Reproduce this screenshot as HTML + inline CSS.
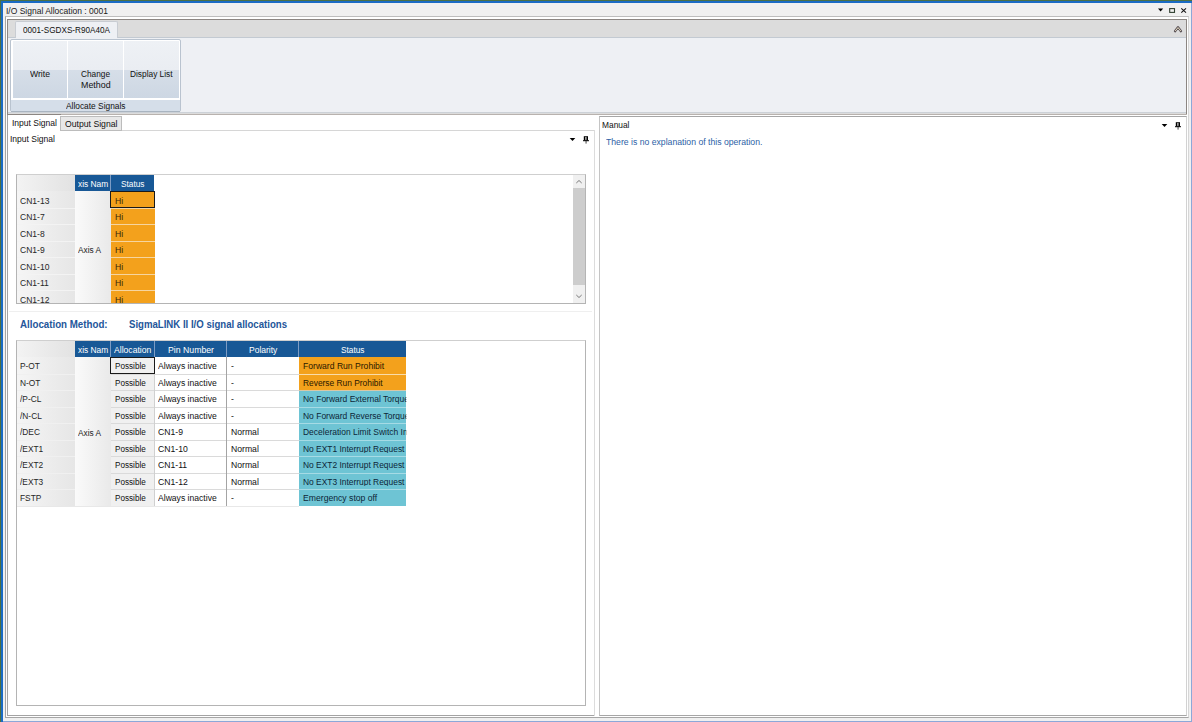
<!DOCTYPE html>
<html><head><meta charset="utf-8">
<style>
*{box-sizing:border-box;margin:0;padding:0}
html,body{width:1192px;height:722px;overflow:hidden;background:#f0f0f0;font-family:"Liberation Sans",sans-serif;color:#1e1e1e;position:relative}
.a{position:absolute}
.t{position:absolute;white-space:nowrap;line-height:1}
</style></head><body>
<div class="a" style="left:0px;top:0px;width:1192px;height:722px;background:#f0f0f0"></div>
<div class="a" style="left:0px;top:0px;width:1192px;height:1px;background:#4b7045"></div>
<div class="a" style="left:0px;top:0px;width:1px;height:722px;background:#4b7045"></div>
<div class="a" style="left:1px;top:1px;width:1191px;height:2px;background:#1a6bc4"></div>
<div class="a" style="left:1px;top:1px;width:2px;height:721px;background:#1a6bc4"></div>
<div class="a" style="left:1191px;top:3px;width:1px;height:719px;background:#8ca8d8"></div>
<div class="a" style="left:3px;top:721px;width:1189px;height:1px;background:#8ca8d8"></div>
<div class="t" style="left:6.00px;top:5.60px;font-size:9.6px;color:#1a1a1a;transform:scaleX(0.8848);transform-origin:0 0;">I/O Signal Allocation : 0001</div>
<svg class="a" style="left:1150px;top:0px" width="42" height="16" viewBox="0 0 42 16"><path d="M8 8.5 L13.2 8.5 L10.6 11.6 Z" fill="#000"/><rect x="19.7" y="8.6" width="4.8" height="3.8" fill="none" stroke="#2f3f2f" stroke-width="1.1"/><path d="M31.3 8.3 L36 12.7 M36 8.3 L31.3 12.7" stroke="#111" stroke-width="1.05"/></svg>
<div class="a" style="left:5px;top:16px;width:1184px;height:702px;border:1px solid #a6a6a6;border-top-color:#bdbdbd;border-right-color:#d6d6d6;background:#fff"></div>
<div class="a" style="left:7px;top:19px;width:1180px;height:96px;border:1px solid #8c8682;background:#eef0f4"></div>
<div class="a" style="left:8px;top:20px;width:1178px;height:17.5px;background:#dcdcdc;border-bottom:1px solid #c3cad2"></div>
<div class="a" style="left:15px;top:20.5px;width:103px;height:17.5px;background:#eef0f4;border:1px solid #c8ccd2;border-bottom:none;border-radius:2px 2px 0 0"></div>
<div class="t" style="left:23.00px;top:24.60px;font-size:9.6px;color:#111;transform:scaleX(0.8492);transform-origin:0 0;">0001-SGDXS-R90A40A</div>
<svg class="a" style="left:1171.5px;top:23px" width="12" height="11" viewBox="0 0 12 11"><path d="M3 8.2 L6 4.2 L9 8.2" fill="none" stroke="#5c5458" stroke-width="2.3" stroke-linejoin="round" stroke-linecap="round"/><path d="M3.2 8 L6 4.6 L8.8 8" fill="none" stroke="#f2e6c8" stroke-width="0.9" stroke-linejoin="round"/></svg>
<div class="a" style="left:10px;top:39px;width:171px;height:73px;border:1px solid #b9c3cf;border-radius:2px;background:#fff"></div>
<div class="a" style="left:13px;top:41px;width:54px;height:57px;background:linear-gradient(#eef1f5,#eaedf2 51%,#d6dee8 51%,#cdd7e3)"></div>
<div class="a" style="left:68px;top:41px;width:55px;height:57px;background:linear-gradient(#eef1f5,#eaedf2 51%,#d6dee8 51%,#cdd7e3)"></div>
<div class="a" style="left:124px;top:41px;width:54.5px;height:57px;background:linear-gradient(#eef1f5,#eaedf2 51%,#d6dee8 51%,#cdd7e3)"></div>
<div class="t" style="left:30.00px;top:68.60px;font-size:9.6px;color:#111;transform:scaleX(0.8999);transform-origin:0 0;">Write</div>
<div class="t" style="left:81.00px;top:68.60px;font-size:9.6px;color:#111;transform:scaleX(0.8624);transform-origin:0 0;">Change</div>
<div class="t" style="left:81.00px;top:79.60px;font-size:9.6px;color:#111;transform:scaleX(0.9245);transform-origin:0 0;">Method</div>
<div class="t" style="left:130.00px;top:68.60px;font-size:9.6px;color:#111;transform:scaleX(0.8679);transform-origin:0 0;">Display List</div>
<div class="a" style="left:11px;top:99.5px;width:169px;height:12px;background:#d5dee9"></div>
<div class="t" style="left:66.00px;top:100.60px;font-size:9.6px;color:#111;transform:scaleX(0.8711);transform-origin:0 0;">Allocate Signals</div>
<div class="a" style="left:11px;top:111px;width:169px;height:1px;background:#a9b4c0"></div>
<div class="a" style="left:7px;top:114px;width:588px;height:602px;border:1px solid #a3a3a3;border-right:none;border-top-color:#b4aeaa;background:#fff"></div>
<div class="a" style="left:7px;top:114px;width:54px;height:1px;background:#8c8682"></div>
<div class="a" style="left:594px;top:130px;width:1px;height:586px;background:#dcdcdc"></div>
<div class="a" style="left:8px;top:112px;width:1178px;height:1px;background:#ccd1d7"></div>
<div class="a" style="left:8px;top:113px;width:1178px;height:1px;background:#dcdcdc"></div>
<div class="a" style="left:61px;top:114px;width:1126px;height:1px;background:#b8b2ae"></div>
<div class="a" style="left:121px;top:130px;width:473px;height:1px;background:#d6d6d6"></div>
<div class="a" style="left:60px;top:116px;width:61.5px;height:15px;background:#e8e8e8;border:1px solid #bcbcbc"></div>
<div class="t" style="left:12.00px;top:117.60px;font-size:9.6px;color:#111;transform:scaleX(0.8874);transform-origin:0 0;">Input Signal</div>
<div class="t" style="left:64.50px;top:118.60px;font-size:9.6px;color:#111;transform:scaleX(0.9024);transform-origin:0 0;">Output Signal</div>
<div class="t" style="left:10.00px;top:133.60px;font-size:9.6px;color:#111;transform:scaleX(0.8874);transform-origin:0 0;">Input Signal</div>
<svg class="a" style="left:569px;top:136px" width="24" height="10" viewBox="0 0 24 10"><path d="M0.7 1.9 L6.3 1.9 L3.5 4.9 Z" fill="#000"/><path d="M14.8 0.2 H19 V4.5 H14.8 Z" fill="#000"/><rect x="16.4" y="0.9" width="1" height="3" fill="#fff"/><rect x="14" y="4.2" width="6" height="1" fill="#000"/><rect x="16.6" y="5" width="0.9" height="2.6" fill="#333"/></svg>
<div class="a" style="left:16px;top:174px;width:570px;height:130px;border:1px solid #b4b4b4;border-top-color:#cfcfcf;background:#fff"></div>
<div class="a" style="left:17px;top:175px;width:58px;height:16px;background:linear-gradient(90deg,#f3f3f3,#e2e2e2)"></div>
<div class="a" style="left:17px;top:191px;width:58px;height:1px;background:#f2f2f2"></div>
<div class="a" style="left:75px;top:175px;width:79px;height:16px;background:#185896"></div>
<div class="t" style="left:78.00px;top:178.60px;font-size:9.6px;color:#fff;transform:scaleX(0.8712);transform-origin:0 0;width:36.7px;overflow:hidden;">xis Nam</div>
<div class="a" style="left:110px;top:175px;width:1px;height:16px;background:#7d9cc4"></div>
<div class="t" style="left:120.75px;top:178.60px;font-size:9.6px;color:#fff;transform:scaleX(0.8635);transform-origin:0 0;">Status</div>
<div class="a" style="left:17px;top:191.0px;width:58px;height:16.5px;background:linear-gradient(90deg,#f5f5f5,#e6e6e6)"></div>
<div class="a" style="left:110.5px;top:191.0px;width:44px;height:16.5px;background:#f3a11c"></div>
<div class="a" style="left:17px;top:207.5px;width:58px;height:16.5px;background:linear-gradient(90deg,#f5f5f5,#e6e6e6)"></div>
<div class="a" style="left:110.5px;top:207.5px;width:44px;height:16.5px;background:#f3a11c"></div>
<div class="a" style="left:17px;top:224.0px;width:58px;height:16.5px;background:linear-gradient(90deg,#f5f5f5,#e6e6e6)"></div>
<div class="a" style="left:110.5px;top:224.0px;width:44px;height:16.5px;background:#f3a11c"></div>
<div class="a" style="left:17px;top:240.5px;width:58px;height:16.5px;background:linear-gradient(90deg,#f5f5f5,#e6e6e6)"></div>
<div class="a" style="left:110.5px;top:240.5px;width:44px;height:16.5px;background:#f3a11c"></div>
<div class="a" style="left:17px;top:257.0px;width:58px;height:16.5px;background:linear-gradient(90deg,#f5f5f5,#e6e6e6)"></div>
<div class="a" style="left:110.5px;top:257.0px;width:44px;height:16.5px;background:#f3a11c"></div>
<div class="a" style="left:17px;top:273.5px;width:58px;height:16.5px;background:linear-gradient(90deg,#f5f5f5,#e6e6e6)"></div>
<div class="a" style="left:110.5px;top:273.5px;width:44px;height:16.5px;background:#f3a11c"></div>
<div class="a" style="left:17px;top:290.0px;width:58px;height:13.0px;background:linear-gradient(90deg,#f5f5f5,#e6e6e6)"></div>
<div class="a" style="left:110.5px;top:290.0px;width:44px;height:13.0px;background:#f3a11c"></div>
<div class="a" style="left:17px;top:207.5px;width:58px;height:1px;background:#f3f3f3"></div>
<div class="a" style="left:110.5px;top:207.5px;width:44.0px;height:1px;background:#f6d5a0"></div>
<div class="a" style="left:17px;top:224.0px;width:58px;height:1px;background:#f3f3f3"></div>
<div class="a" style="left:110.5px;top:224.0px;width:44.0px;height:1px;background:#f6d5a0"></div>
<div class="a" style="left:17px;top:240.5px;width:58px;height:1px;background:#f3f3f3"></div>
<div class="a" style="left:110.5px;top:240.5px;width:44.0px;height:1px;background:#f6d5a0"></div>
<div class="a" style="left:17px;top:257.0px;width:58px;height:1px;background:#f3f3f3"></div>
<div class="a" style="left:110.5px;top:257.0px;width:44.0px;height:1px;background:#f6d5a0"></div>
<div class="a" style="left:17px;top:273.5px;width:58px;height:1px;background:#f3f3f3"></div>
<div class="a" style="left:110.5px;top:273.5px;width:44.0px;height:1px;background:#f6d5a0"></div>
<div class="a" style="left:17px;top:290.0px;width:58px;height:1px;background:#f3f3f3"></div>
<div class="a" style="left:110.5px;top:290.0px;width:44.0px;height:1px;background:#f6d5a0"></div>
<div class="t" style="left:20.00px;top:195.60px;font-size:9.6px;color:#262626;transform:scaleX(0.8900);transform-origin:0 0;">CN1-13</div>
<div class="t" style="left:114.80px;top:195.60px;font-size:9.6px;color:#3a2608;transform:scaleX(0.9000);transform-origin:0 0;">Hi</div>
<div class="t" style="left:20.00px;top:212.10px;font-size:9.6px;color:#262626;transform:scaleX(0.8900);transform-origin:0 0;">CN1-7</div>
<div class="t" style="left:114.80px;top:212.10px;font-size:9.6px;color:#3a2608;transform:scaleX(0.9000);transform-origin:0 0;">Hi</div>
<div class="t" style="left:20.00px;top:228.60px;font-size:9.6px;color:#262626;transform:scaleX(0.8900);transform-origin:0 0;">CN1-8</div>
<div class="t" style="left:114.80px;top:228.60px;font-size:9.6px;color:#3a2608;transform:scaleX(0.9000);transform-origin:0 0;">Hi</div>
<div class="t" style="left:20.00px;top:245.10px;font-size:9.6px;color:#262626;transform:scaleX(0.8900);transform-origin:0 0;">CN1-9</div>
<div class="t" style="left:114.80px;top:245.10px;font-size:9.6px;color:#3a2608;transform:scaleX(0.9000);transform-origin:0 0;">Hi</div>
<div class="t" style="left:20.00px;top:261.60px;font-size:9.6px;color:#262626;transform:scaleX(0.8900);transform-origin:0 0;">CN1-10</div>
<div class="t" style="left:114.80px;top:261.60px;font-size:9.6px;color:#3a2608;transform:scaleX(0.9000);transform-origin:0 0;">Hi</div>
<div class="t" style="left:20.00px;top:278.10px;font-size:9.6px;color:#262626;transform:scaleX(0.8900);transform-origin:0 0;">CN1-11</div>
<div class="t" style="left:114.80px;top:278.10px;font-size:9.6px;color:#3a2608;transform:scaleX(0.9000);transform-origin:0 0;">Hi</div>
<div class="t" style="left:20.00px;top:294.60px;font-size:9.6px;color:#262626;transform:scaleX(0.8900);transform-origin:0 0;">CN1-12</div>
<div class="t" style="left:114.80px;top:294.60px;font-size:9.6px;color:#3a2608;transform:scaleX(0.9000);transform-origin:0 0;">Hi</div>
<div class="a" style="left:75px;top:191px;width:35.5px;height:112px;background:linear-gradient(90deg,#fafafa,#e9e9e9)"></div>
<div class="t" style="left:78.00px;top:245.10px;font-size:9.6px;color:#222;transform:scaleX(0.8621);transform-origin:0 0;">Axis A</div>
<div class="a" style="left:110.2px;top:190.8px;width:44.6px;height:17.2px;border:1.6px solid #1a1a1a"></div>
<div class="a" style="left:573px;top:175px;width:12px;height:128px;background:#f0f0f0"></div>
<div class="a" style="left:573px;top:187.5px;width:12px;height:97.5px;background:#cdcdcd"></div>
<svg class="a" style="left:573px;top:175px" width="12" height="128" viewBox="0 0 12 128"><path d="M3.3 8 L6 5.5 L8.7 8" fill="none" stroke="#7a7a7a" stroke-width="1"/><path d="M3.3 120 L6 122.5 L8.7 120" fill="none" stroke="#7a7a7a" stroke-width="1"/></svg>
<div class="a" style="left:9px;top:311.3px;width:583px;height:1px;background:#efefef"></div>
<div class="t" style="left:20.30px;top:320.00px;font-size:10px;color:#24569a;transform:scaleX(0.9734);transform-origin:0 0;font-weight:bold;">Allocation Method:</div>
<div class="t" style="left:128.90px;top:320.00px;font-size:10px;color:#24569a;transform:scaleX(0.9606);transform-origin:0 0;font-weight:bold;">SigmaLINK II I/O signal allocations</div>
<div class="a" style="left:16px;top:340px;width:570px;height:366px;border:1px solid #b4b4b4;border-top-color:#cfcfcf;background:#fff"></div>
<div class="a" style="left:17px;top:341px;width:58px;height:16px;background:linear-gradient(90deg,#f3f3f3,#e2e2e2)"></div>
<div class="a" style="left:17px;top:357px;width:58px;height:1px;background:#f2f2f2"></div>
<div class="a" style="left:75px;top:341px;width:331px;height:16px;background:#185896"></div>
<div class="t" style="left:78.00px;top:344.60px;font-size:9.6px;color:#fff;transform:scaleX(0.8712);transform-origin:0 0;width:36.7px;overflow:hidden;">xis Nam</div>
<div class="a" style="left:110px;top:341px;width:1px;height:16px;background:#7d9cc4"></div>
<div class="a" style="left:154px;top:341px;width:1px;height:16px;background:#7d9cc4"></div>
<div class="a" style="left:226px;top:341px;width:1px;height:16px;background:#7d9cc4"></div>
<div class="a" style="left:298px;top:341px;width:1px;height:16px;background:#7d9cc4"></div>
<div class="t" style="left:114.05px;top:344.60px;font-size:9.6px;color:#fff;transform:scaleX(0.8985);transform-origin:0 0;">Allocation</div>
<div class="t" style="left:168.00px;top:344.60px;font-size:9.6px;color:#fff;transform:scaleX(0.9075);transform-origin:0 0;">Pin Number</div>
<div class="t" style="left:248.80px;top:344.60px;font-size:9.6px;color:#fff;transform:scaleX(0.8871);transform-origin:0 0;">Polarity</div>
<div class="t" style="left:341.00px;top:344.60px;font-size:9.6px;color:#fff;transform:scaleX(0.8635);transform-origin:0 0;">Status</div>
<div class="a" style="left:17px;top:357.0px;width:58px;height:16.5px;background:linear-gradient(90deg,#f5f5f5,#e6e6e6)"></div>
<div class="a" style="left:110.5px;top:357.0px;width:44px;height:16.5px;background:#f0f0f0"></div>
<div class="a" style="left:298.5px;top:357.0px;width:107.5px;height:16.5px;background:#f3a11c"></div>
<div class="a" style="left:17px;top:373.5px;width:58px;height:16.5px;background:linear-gradient(90deg,#f5f5f5,#e6e6e6)"></div>
<div class="a" style="left:110.5px;top:373.5px;width:44px;height:16.5px;background:#f0f0f0"></div>
<div class="a" style="left:298.5px;top:373.5px;width:107.5px;height:16.5px;background:#f3a11c"></div>
<div class="a" style="left:17px;top:390.0px;width:58px;height:16.5px;background:linear-gradient(90deg,#f5f5f5,#e6e6e6)"></div>
<div class="a" style="left:110.5px;top:390.0px;width:44px;height:16.5px;background:#f0f0f0"></div>
<div class="a" style="left:298.5px;top:390.0px;width:107.5px;height:16.5px;background:#6ec4d4"></div>
<div class="a" style="left:17px;top:406.5px;width:58px;height:16.5px;background:linear-gradient(90deg,#f5f5f5,#e6e6e6)"></div>
<div class="a" style="left:110.5px;top:406.5px;width:44px;height:16.5px;background:#f0f0f0"></div>
<div class="a" style="left:298.5px;top:406.5px;width:107.5px;height:16.5px;background:#6ec4d4"></div>
<div class="a" style="left:17px;top:423.0px;width:58px;height:16.5px;background:linear-gradient(90deg,#f5f5f5,#e6e6e6)"></div>
<div class="a" style="left:110.5px;top:423.0px;width:44px;height:16.5px;background:#f0f0f0"></div>
<div class="a" style="left:298.5px;top:423.0px;width:107.5px;height:16.5px;background:#6ec4d4"></div>
<div class="a" style="left:17px;top:439.5px;width:58px;height:16.5px;background:linear-gradient(90deg,#f5f5f5,#e6e6e6)"></div>
<div class="a" style="left:110.5px;top:439.5px;width:44px;height:16.5px;background:#f0f0f0"></div>
<div class="a" style="left:298.5px;top:439.5px;width:107.5px;height:16.5px;background:#6ec4d4"></div>
<div class="a" style="left:17px;top:456.0px;width:58px;height:16.5px;background:linear-gradient(90deg,#f5f5f5,#e6e6e6)"></div>
<div class="a" style="left:110.5px;top:456.0px;width:44px;height:16.5px;background:#f0f0f0"></div>
<div class="a" style="left:298.5px;top:456.0px;width:107.5px;height:16.5px;background:#6ec4d4"></div>
<div class="a" style="left:17px;top:472.5px;width:58px;height:16.5px;background:linear-gradient(90deg,#f5f5f5,#e6e6e6)"></div>
<div class="a" style="left:110.5px;top:472.5px;width:44px;height:16.5px;background:#f0f0f0"></div>
<div class="a" style="left:298.5px;top:472.5px;width:107.5px;height:16.5px;background:#6ec4d4"></div>
<div class="a" style="left:17px;top:489.0px;width:58px;height:16.5px;background:linear-gradient(90deg,#f5f5f5,#e6e6e6)"></div>
<div class="a" style="left:110.5px;top:489.0px;width:44px;height:16.5px;background:#f0f0f0"></div>
<div class="a" style="left:298.5px;top:489.0px;width:107.5px;height:16.5px;background:#6ec4d4"></div>
<div class="a" style="left:17px;top:373.5px;width:58px;height:1px;background:#f0f0f0"></div>
<div class="a" style="left:110.5px;top:373.5px;width:188.0px;height:1px;background:#dadada"></div>
<div class="a" style="left:298.5px;top:373.5px;width:107.5px;height:1px;background:#f9dcaa"></div>
<div class="a" style="left:17px;top:390.0px;width:58px;height:1px;background:#f0f0f0"></div>
<div class="a" style="left:110.5px;top:390.0px;width:188.0px;height:1px;background:#dadada"></div>
<div class="a" style="left:298.5px;top:390.0px;width:107.5px;height:1px;background:#d8c8a8"></div>
<div class="a" style="left:17px;top:406.5px;width:58px;height:1px;background:#f0f0f0"></div>
<div class="a" style="left:110.5px;top:406.5px;width:188.0px;height:1px;background:#dadada"></div>
<div class="a" style="left:298.5px;top:406.5px;width:107.5px;height:1px;background:#a6dbe5"></div>
<div class="a" style="left:17px;top:423.0px;width:58px;height:1px;background:#f0f0f0"></div>
<div class="a" style="left:110.5px;top:423.0px;width:188.0px;height:1px;background:#dadada"></div>
<div class="a" style="left:298.5px;top:423.0px;width:107.5px;height:1px;background:#a6dbe5"></div>
<div class="a" style="left:17px;top:439.5px;width:58px;height:1px;background:#f0f0f0"></div>
<div class="a" style="left:110.5px;top:439.5px;width:188.0px;height:1px;background:#dadada"></div>
<div class="a" style="left:298.5px;top:439.5px;width:107.5px;height:1px;background:#a6dbe5"></div>
<div class="a" style="left:17px;top:456.0px;width:58px;height:1px;background:#f0f0f0"></div>
<div class="a" style="left:110.5px;top:456.0px;width:188.0px;height:1px;background:#dadada"></div>
<div class="a" style="left:298.5px;top:456.0px;width:107.5px;height:1px;background:#a6dbe5"></div>
<div class="a" style="left:17px;top:472.5px;width:58px;height:1px;background:#f0f0f0"></div>
<div class="a" style="left:110.5px;top:472.5px;width:188.0px;height:1px;background:#dadada"></div>
<div class="a" style="left:298.5px;top:472.5px;width:107.5px;height:1px;background:#a6dbe5"></div>
<div class="a" style="left:17px;top:489.0px;width:58px;height:1px;background:#f0f0f0"></div>
<div class="a" style="left:110.5px;top:489.0px;width:188.0px;height:1px;background:#dadada"></div>
<div class="a" style="left:298.5px;top:489.0px;width:107.5px;height:1px;background:#a6dbe5"></div>
<div class="a" style="left:17px;top:505.5px;width:281.5px;height:1px;background:#e8e8e8"></div>
<div class="t" style="left:19.80px;top:361.10px;font-size:9.6px;color:#262626;transform:scaleX(0.8700);transform-origin:0 0;">P-OT</div>
<div class="t" style="left:114.50px;top:361.10px;font-size:9.6px;color:#111;transform:scaleX(0.8488);transform-origin:0 0;">Possible</div>
<div class="t" style="left:158.20px;top:361.10px;font-size:9.6px;color:#111;transform:scaleX(0.8950);transform-origin:0 0;">Always inactive</div>
<div class="t" style="left:230.70px;top:361.10px;font-size:9.6px;color:#111;transform:scaleX(0.9000);transform-origin:0 0;">-</div>
<div class="t" style="left:302.50px;top:361.10px;font-size:9.6px;color:#2a1800;transform:scaleX(0.8953);transform-origin:0 0;width:115.6px;overflow:hidden;">Forward Run Prohibit</div>
<div class="t" style="left:19.80px;top:377.60px;font-size:9.6px;color:#262626;transform:scaleX(0.8700);transform-origin:0 0;">N-OT</div>
<div class="t" style="left:114.50px;top:377.60px;font-size:9.6px;color:#111;transform:scaleX(0.8488);transform-origin:0 0;">Possible</div>
<div class="t" style="left:158.20px;top:377.60px;font-size:9.6px;color:#111;transform:scaleX(0.8950);transform-origin:0 0;">Always inactive</div>
<div class="t" style="left:230.70px;top:377.60px;font-size:9.6px;color:#111;transform:scaleX(0.9000);transform-origin:0 0;">-</div>
<div class="t" style="left:302.50px;top:377.60px;font-size:9.6px;color:#2a1800;transform:scaleX(0.8735);transform-origin:0 0;width:118.5px;overflow:hidden;">Reverse Run Prohibit</div>
<div class="t" style="left:19.80px;top:394.10px;font-size:9.6px;color:#262626;transform:scaleX(0.8700);transform-origin:0 0;">/P-CL</div>
<div class="t" style="left:114.50px;top:394.10px;font-size:9.6px;color:#111;transform:scaleX(0.8488);transform-origin:0 0;">Possible</div>
<div class="t" style="left:158.20px;top:394.10px;font-size:9.6px;color:#111;transform:scaleX(0.8950);transform-origin:0 0;">Always inactive</div>
<div class="t" style="left:230.70px;top:394.10px;font-size:9.6px;color:#111;transform:scaleX(0.9000);transform-origin:0 0;">-</div>
<div class="t" style="left:302.50px;top:394.10px;font-size:9.6px;color:#0d2638;transform:scaleX(0.8840);transform-origin:0 0;width:117.1px;overflow:hidden;">No Forward External Torque</div>
<div class="t" style="left:19.80px;top:410.60px;font-size:9.6px;color:#262626;transform:scaleX(0.8700);transform-origin:0 0;">/N-CL</div>
<div class="t" style="left:114.50px;top:410.60px;font-size:9.6px;color:#111;transform:scaleX(0.8488);transform-origin:0 0;">Possible</div>
<div class="t" style="left:158.20px;top:410.60px;font-size:9.6px;color:#111;transform:scaleX(0.8950);transform-origin:0 0;">Always inactive</div>
<div class="t" style="left:230.70px;top:410.60px;font-size:9.6px;color:#111;transform:scaleX(0.9000);transform-origin:0 0;">-</div>
<div class="t" style="left:302.50px;top:410.60px;font-size:9.6px;color:#0d2638;transform:scaleX(0.8840);transform-origin:0 0;width:117.1px;overflow:hidden;">No Forward Reverse Torque</div>
<div class="t" style="left:19.80px;top:427.10px;font-size:9.6px;color:#262626;transform:scaleX(0.8700);transform-origin:0 0;">/DEC</div>
<div class="t" style="left:114.50px;top:427.10px;font-size:9.6px;color:#111;transform:scaleX(0.8488);transform-origin:0 0;">Possible</div>
<div class="t" style="left:158.20px;top:427.10px;font-size:9.6px;color:#111;transform:scaleX(0.9000);transform-origin:0 0;">CN1-9</div>
<div class="t" style="left:230.70px;top:427.10px;font-size:9.6px;color:#111;transform:scaleX(0.9000);transform-origin:0 0;">Normal</div>
<div class="t" style="left:302.50px;top:427.10px;font-size:9.6px;color:#0d2638;transform:scaleX(0.8840);transform-origin:0 0;width:117.1px;overflow:hidden;">Deceleration Limit Switch Input</div>
<div class="t" style="left:19.80px;top:443.60px;font-size:9.6px;color:#262626;transform:scaleX(0.8700);transform-origin:0 0;">/EXT1</div>
<div class="t" style="left:114.50px;top:443.60px;font-size:9.6px;color:#111;transform:scaleX(0.8488);transform-origin:0 0;">Possible</div>
<div class="t" style="left:158.20px;top:443.60px;font-size:9.6px;color:#111;transform:scaleX(0.9000);transform-origin:0 0;">CN1-10</div>
<div class="t" style="left:230.70px;top:443.60px;font-size:9.6px;color:#111;transform:scaleX(0.9000);transform-origin:0 0;">Normal</div>
<div class="t" style="left:302.50px;top:443.60px;font-size:9.6px;color:#0d2638;transform:scaleX(0.8765);transform-origin:0 0;width:118.1px;overflow:hidden;">No EXT1 Interrupt Request</div>
<div class="t" style="left:19.80px;top:460.10px;font-size:9.6px;color:#262626;transform:scaleX(0.8700);transform-origin:0 0;">/EXT2</div>
<div class="t" style="left:114.50px;top:460.10px;font-size:9.6px;color:#111;transform:scaleX(0.8488);transform-origin:0 0;">Possible</div>
<div class="t" style="left:158.20px;top:460.10px;font-size:9.6px;color:#111;transform:scaleX(0.9000);transform-origin:0 0;">CN1-11</div>
<div class="t" style="left:230.70px;top:460.10px;font-size:9.6px;color:#111;transform:scaleX(0.9000);transform-origin:0 0;">Normal</div>
<div class="t" style="left:302.50px;top:460.10px;font-size:9.6px;color:#0d2638;transform:scaleX(0.8765);transform-origin:0 0;width:118.1px;overflow:hidden;">No EXT2 Interrupt Request</div>
<div class="t" style="left:19.80px;top:476.60px;font-size:9.6px;color:#262626;transform:scaleX(0.8700);transform-origin:0 0;">/EXT3</div>
<div class="t" style="left:114.50px;top:476.60px;font-size:9.6px;color:#111;transform:scaleX(0.8488);transform-origin:0 0;">Possible</div>
<div class="t" style="left:158.20px;top:476.60px;font-size:9.6px;color:#111;transform:scaleX(0.9000);transform-origin:0 0;">CN1-12</div>
<div class="t" style="left:230.70px;top:476.60px;font-size:9.6px;color:#111;transform:scaleX(0.9000);transform-origin:0 0;">Normal</div>
<div class="t" style="left:302.50px;top:476.60px;font-size:9.6px;color:#0d2638;transform:scaleX(0.8765);transform-origin:0 0;width:118.1px;overflow:hidden;">No EXT3 Interrupt Request</div>
<div class="t" style="left:19.80px;top:493.10px;font-size:9.6px;color:#262626;transform:scaleX(0.8700);transform-origin:0 0;">FSTP</div>
<div class="t" style="left:114.50px;top:493.10px;font-size:9.6px;color:#111;transform:scaleX(0.8488);transform-origin:0 0;">Possible</div>
<div class="t" style="left:158.20px;top:493.10px;font-size:9.6px;color:#111;transform:scaleX(0.8950);transform-origin:0 0;">Always inactive</div>
<div class="t" style="left:230.70px;top:493.10px;font-size:9.6px;color:#111;transform:scaleX(0.9000);transform-origin:0 0;">-</div>
<div class="t" style="left:302.50px;top:493.10px;font-size:9.6px;color:#0d2638;transform:scaleX(0.9001);transform-origin:0 0;width:115.0px;overflow:hidden;">Emergency stop off</div>
<div class="a" style="left:75px;top:357px;width:35.5px;height:148.5px;background:linear-gradient(90deg,#fafafa,#e9e9e9)"></div>
<div class="t" style="left:78.00px;top:427.60px;font-size:9.6px;color:#222;transform:scaleX(0.8621);transform-origin:0 0;">Axis A</div>
<div class="a" style="left:154px;top:357px;width:1px;height:148.5px;background:#d0d0d0"></div>
<div class="a" style="left:226px;top:357px;width:1px;height:148.5px;background:#a4a4a4"></div>
<div class="a" style="left:110.2px;top:356.8px;width:44.6px;height:17.2px;border:1.6px solid #1a1a1a"></div>
<div class="a" style="left:599px;top:116px;width:588px;height:600px;border:1px solid #a6a6a6;border-left-color:#c4c4c4;border-right-color:#d2d2d2;background:#fff"></div>
<div class="t" style="left:602.00px;top:119.60px;font-size:9.6px;color:#111;transform:scaleX(0.8733);transform-origin:0 0;">Manual</div>
<svg class="a" style="left:1161.3px;top:121.5px" width="24" height="10" viewBox="0 0 24 10"><path d="M0.7 1.9 L6.3 1.9 L3.5 4.9 Z" fill="#000"/><path d="M14.8 0.2 H19 V4.5 H14.8 Z" fill="#000"/><rect x="16.4" y="0.9" width="1" height="3" fill="#fff"/><rect x="14" y="4.2" width="6" height="1" fill="#000"/><rect x="16.6" y="5" width="0.9" height="2.6" fill="#333"/></svg>
<div class="t" style="left:605.50px;top:136.60px;font-size:9.6px;color:#2d5fa6;transform:scaleX(0.9023);transform-origin:0 0;">There is no explanation of this operation.</div>
</body></html>
